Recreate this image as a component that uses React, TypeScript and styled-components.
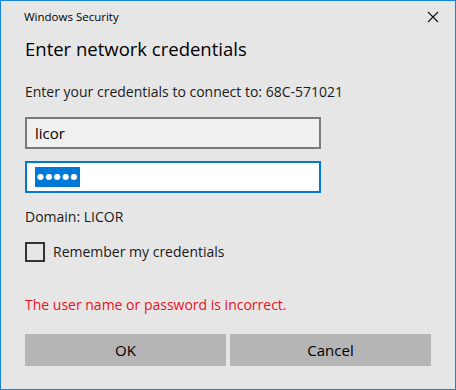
import React from "react";
import styled, { createGlobalStyle } from "styled-components";

const GlobalStyle = createGlobalStyle`
    html, body {
        margin: 0;
        padding: 0;
        background: #e6e6e6;
    }
    * {
        box-sizing: border-box;
    }
`

export default function App(){
    return(
        <>
            <GlobalStyle />
            <Window>
                <TitleBar>
                    <TitleText>Windows Security</TitleText>
                    <CloseBtn aria-label="Close">
                        <svg width="12" height="12" viewBox="0 0 12 12">
                            <path d="M1 1 L11 11 M11 1 L1 11" stroke="#111" strokeWidth="1.1" fill="none" />
                        </svg>
                    </CloseBtn>
                </TitleBar>
                <Body>
                    <Heading>Enter network credentials</Heading>
                    <Message>Enter your credentials to connect to: 68C-571021</Message>
                    <Field>licor</Field>
                    <Field $focused>
                        <Selection>●●●●●</Selection>
                    </Field>
                    <Domain>Domain: LICOR</Domain>
                    <CheckRow>
                        <CheckBox />
                        <CheckLabel>Remember my credentials</CheckLabel>
                    </CheckRow>
                    <ErrorText>The user name or password is incorrect.</ErrorText>
                    <ButtonRow>
                        <Button>OK</Button>
                        <Button>Cancel</Button>
                    </ButtonRow>
                </Body>
            </Window>
        </>
    )
}

const Window = styled.div`
    width: 456px;
    height: 390px;
    border: 1px solid #1883d7;
    background: #e6e6e6;
    font-family: "Open Sans", "Noto Sans", sans-serif;
    color: #1a1a1a;
    display: flex;
    flex-direction: column;
`
const TitleBar = styled.div`
    height: 31px;
    display: flex;
    align-items: center;
    justify-content: space-between;
    padding: 0 16px 0 23px;
`
const TitleText = styled.span`
    font-size: 11.5px;
    color: #000;
`
const CloseBtn = styled.div`
    width: 12px;
    height: 12px;
    display: flex;
`
const Body = styled.div`
    padding: 0 24px;
    display: flex;
    flex-direction: column;
`
const Heading = styled.h1`
    margin: 3px 0 0;
    font-size: 18.5px;
    font-weight: 400;
    line-height: 28px;
    color: #000;
`
const Message = styled.div`
    margin-top: 19px;
    font-size: 14px;
    line-height: 20px;
`
const Field = styled.div<{ $focused?: boolean }>`
    width: 296px;
    height: 32px;
    margin-top: ${p => p.$focused ? "12px" : "15px"};
    border: 2px solid ${p => p.$focused ? "#0078d7" : "#7a7a7a"};
    background: ${p => p.$focused ? "#ffffff" : "#f0f0f0"};
    padding: 0 8px;
    display: flex;
    align-items: center;
    font-size: 15px;
    color: #000;
`
const Selection = styled.span`
    background: #0078d7;
    color: #fff;
    font-family: "DejaVu Sans", sans-serif;
    font-size: 8px;
    letter-spacing: 1.4px;
    line-height: 20px;
    padding: 0 1px 0 2px;
`
const Domain = styled.div`
    margin-top: 14px;
    font-size: 14px;
    line-height: 20px;
`
const CheckRow = styled.div`
    margin-top: 15px;
    display: flex;
    align-items: center;
    gap: 8px;
`
const CheckBox = styled.div`
    width: 20px;
    height: 20px;
    border: 2px solid #333;
`
const CheckLabel = styled.span`
    font-size: 14px;
    line-height: 20px;
`
const ErrorText = styled.div`
    margin-top: 33px;
    font-size: 14px;
    line-height: 20px;
    color: #e81123;
`
const ButtonRow = styled.div`
    margin-top: 19px;
    display: grid;
    grid-template-columns: 201px 201px;
    gap: 4px;
`
const Button = styled.div`
    height: 32px;
    background: #b5b5b5;
    display: flex;
    align-items: center;
    justify-content: center;
    font-size: 15px;
    color: #000;
`
